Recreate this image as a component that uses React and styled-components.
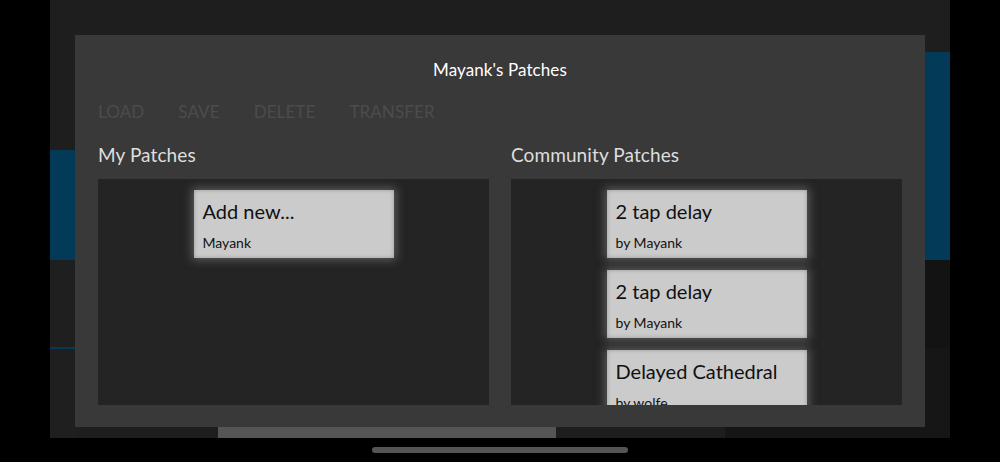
import React from "react";
import styled, { createGlobalStyle } from "styled-components";

const Global = createGlobalStyle`
  html, body { margin: 0; padding: 0; background: #000; }
  body { width: 1000px; height: 462px; overflow: hidden; font-family: Lato, "Noto Sans", sans-serif; }
`;

const Page = styled.div`
  width: 1000px;
  height: 462px;
  background: #000;
  display: flex;
  flex-direction: column;
  align-items: center;
`;

const Screen = styled.div`
  position: relative;
  width: 900px;
  height: 438px;
  background: #1e1e1e;
  display: grid;
  grid-template-columns: 25px 1fr 25px;
`;

const SideCol = styled.div`
  display: flex;
  flex-direction: column;
  background: ${(p) => p.$bg || "#1e1e1e"};
`;

const Band = styled.div`
  height: ${(p) => p.$h}px;
  flex: ${(p) => (p.$grow ? 1 : "none")};
  background: ${(p) => p.$bg};
`;

const MidCol = styled.div`
  display: flex;
  flex-direction: column;
  justify-content: flex-end;
`;

const BottomStrip = styled.div`
  height: 11px;
  display: grid;
  grid-template-columns: 143px 338px 169px 1fr;
`;

const StripPart = styled.div`
  background: ${(p) => p.$bg};
`;

const HomeBar = styled.div`
  width: 256px;
  height: 6px;
  border-radius: 3px;
  background: #555;
  margin-top: 9px;
`;

const Modal = styled.div`
  position: absolute;
  left: 25px;
  top: 35px;
  width: 850px;
  height: 392px;
  box-sizing: border-box;
  background: #393939;
  padding: 24px 23px 22px;
  display: flex;
  flex-direction: column;
`;

const Title = styled.div`
  text-align: center;
  color: #fff;
  font-family: Lato, sans-serif;
  font-size: 17px;
  line-height: 22px;
  letter-spacing: 0.1px;
`;

const Toolbar = styled.div`
  display: flex;
  gap: 34px;
  margin-top: 20px;
`;

const ToolButton = styled.span`
  font-family: Lato, sans-serif;
  font-size: 17px;
  line-height: 22px;
  color: #4c4c4c;
  letter-spacing: 0.1px;
`;

const Columns = styled.div`
  flex: 1;
  display: grid;
  grid-template-columns: 1fr 1fr;
  gap: 22px;
  margin-top: 21px;
  min-height: 0;
`;

const Section = styled.div`
  display: flex;
  flex-direction: column;
  min-height: 0;
`;

const SectionTitle = styled.div`
  font-family: Lato, sans-serif;
  font-size: 19px;
  line-height: 22px;
  color: #dedede;
  height: 22px;
  letter-spacing: 0.1px;
`;

const Panel = styled.div`
  flex: 1;
  margin-top: 13px;
  background: #242424;
  overflow: hidden;
  display: flex;
  flex-direction: column;
  align-items: center;
  gap: 12px;
  padding-top: 11px;
  box-sizing: border-box;
`;

const Card = styled.div`
  flex: none;
  width: 200px;
  height: 68px;
  box-sizing: border-box;
  background: #cbcbcb;
  padding: 9px 9px 0;
  box-shadow: 0 0 9px 2px rgba(150, 150, 150, 0.5), inset 0 0 4px rgba(0, 0, 0, 0.25);
  font-family: Lato, sans-serif;
  color: #111;
`;

const CardTitle = styled.div`
  font-size: 20px;
  line-height: 24px;
`;

const CardSub = styled.div`
  font-size: 14px;
  line-height: 18px;
  margin-top: 11px;
`;

const myPatches = [{ name: "Add new...", by: "Mayank" }];
const community = [
  { name: "2 tap delay", by: "by Mayank" },
  { name: "2 tap delay", by: "by Mayank" },
  { name: "Delayed Cathedral", by: "by wolfe" },
];

export default function App() {
  return (
    <>
      <Global />
      <Page>
        <Screen>
          <SideCol>
            <Band $h={150} $bg="#1e1e1e" />
            <Band $h={110} $bg="#023a57" />
            <Band $h={87} $bg="#1f1f1f" />
            <Band $h={2} $bg="#023a57" />
            <Band $grow $bg="#1f1f1f" />
          </SideCol>
          <MidCol>
            <BottomStrip>
              <StripPart $bg="#1e1e1e" />
              <StripPart $bg="#555555" />
              <StripPart $bg="#1e1e1e" />
              <StripPart $bg="#161616" />
            </BottomStrip>
          </MidCol>
          <SideCol>
            <Band $h={52} $bg="#1e1e1e" />
            <Band $h={208} $bg="#023a57" />
            <Band $h={88} $bg="#131313" />
            <Band $grow $bg="#161616" />
          </SideCol>
          <Modal>
            <Title>Mayank's Patches</Title>
            <Toolbar>
              <ToolButton>LOAD</ToolButton>
              <ToolButton>SAVE</ToolButton>
              <ToolButton>DELETE</ToolButton>
              <ToolButton>TRANSFER</ToolButton>
            </Toolbar>
            <Columns>
              <Section>
                <SectionTitle>My Patches</SectionTitle>
                <Panel>
                  {myPatches.map((p, i) => (
                    <Card key={i}>
                      <CardTitle>{p.name}</CardTitle>
                      <CardSub>{p.by}</CardSub>
                    </Card>
                  ))}
                </Panel>
              </Section>
              <Section>
                <SectionTitle>Community Patches</SectionTitle>
                <Panel>
                  {community.map((p, i) => (
                    <Card key={i}>
                      <CardTitle>{p.name}</CardTitle>
                      <CardSub>{p.by}</CardSub>
                    </Card>
                  ))}
                </Panel>
              </Section>
            </Columns>
          </Modal>
        </Screen>
        <HomeBar />
      </Page>
    </>
  );
}
